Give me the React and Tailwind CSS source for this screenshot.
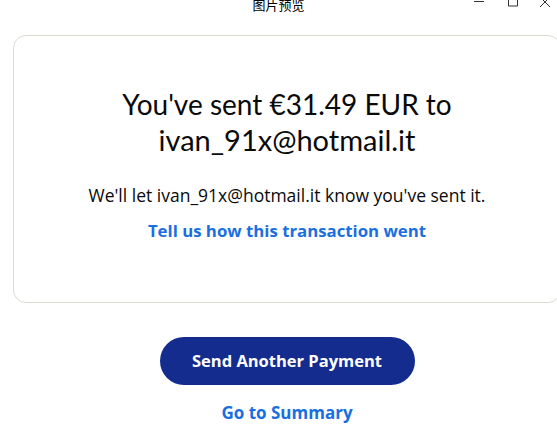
import React from 'react'

const TitleBar = () => (
  <div className="relative h-[35px] flex justify-center">
    <span className="mt-[-4px] text-[13px] leading-[18px] text-black" style={{ fontFamily: '"Noto Sans CJK SC", sans-serif' }}>
      图片预览
    </span>
    <div className="absolute right-0 top-0 flex items-start">
      <svg width="12" height="8" viewBox="0 0 12 8" className="mr-[22px] mt-0">
        <path d="M1 1.5h10" stroke="#333" strokeWidth="1" />
      </svg>
      <svg width="12" height="8" viewBox="0 0 12 8" className="mr-[20px]">
        <path d="M1.5 -2v8h9v-8" fill="none" stroke="#333" strokeWidth="1" />
      </svg>
      <svg width="12" height="8" viewBox="0 0 12 8" className="mr-[6px]">
        <path d="M1 -3l10 10M11 -3L1 7" fill="none" stroke="#333" strokeWidth="1" />
      </svg>
    </div>
  </div>
)

export default function App() {
  return (
    <div className="w-[557px] h-[444px] overflow-hidden bg-white" style={{ fontFamily: '"Open Sans", "Noto Sans", sans-serif' }}>
      <TitleBar />
      <div className="ml-[13px] w-[548px]">
        <div className="h-[268px] rounded-[13px] border border-[#dcdad2] flex flex-col items-center pt-[50px] text-center">
          <h1 className="text-[28px] leading-[36px] text-[#0a0a0a] font-normal" style={{ fontFamily: 'Lato, sans-serif' }}>
            You've sent €31.49 EUR to
            <br />
            <span className="text-[29px]">ivan_91x@hotmail.it</span>
          </h1>
          <p className="mt-[25px] text-[17.5px] leading-[24px] text-[#0a0a0a]">
            We'll let ivan_91x@hotmail.it know you've sent it.
          </p>
          <a className="mt-[12px] text-[16.8px] leading-[24px] font-bold text-[#1a6fe0] cursor-pointer">
            Tell us how this transaction went
          </a>
        </div>
        <div className="flex flex-col items-center">
          <button className="mt-[34px] w-[255px] h-[48px] rounded-full bg-[#142c8e] text-white text-[16.5px] font-bold">
            Send Another Payment
          </button>
          <a className="mt-[16px] text-[17px] leading-[24px] font-bold text-[#1a6fe0] cursor-pointer">
            Go to Summary
          </a>
        </div>
      </div>
    </div>
  )
}
